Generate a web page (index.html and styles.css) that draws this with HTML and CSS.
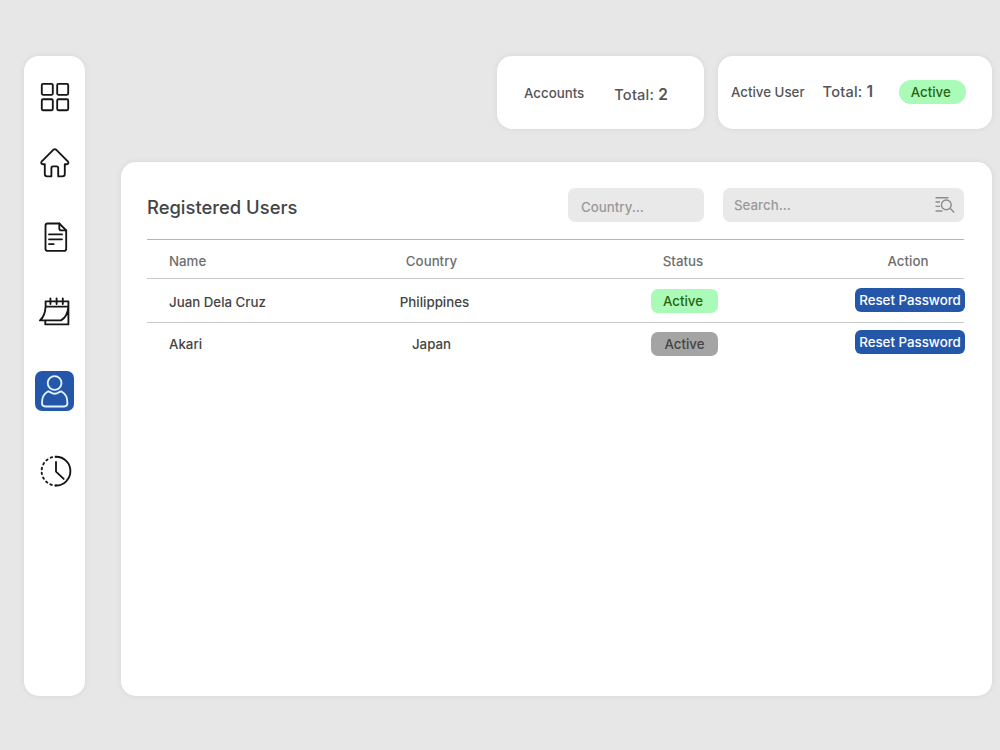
FILE: index.html
```
<!DOCTYPE html>
<html lang="en">
<head>
    <meta charset="utf-8">
    <meta name="viewport" content="width=device-width, initial-scale=1">
    <title>Registered Users</title>
    <link rel="stylesheet" href="styles.css">
</head>

<body>

<nav class="sidebar">
    <a class="nav-dashboard" title="Dashboard">
        <svg viewBox="0 0 40 40"><rect x="6.8" y="6.8" width="11" height="11" rx="1.2" /><rect x="22.2" y="6.8" width="11" height="11" rx="1.2" /><rect x="6.8" y="22.2" width="11" height="11" rx="1.2" /><rect x="22.2" y="22.2" width="11" height="11" rx="1.2" /></svg>
    </a>
    <a class="nav-home" title="Home">
        <svg viewBox="0 0 40 40"><path d="M18.5 6.7 6.8 18.4C5.6 19.8 6.3 21.2 8 21.2H9.8V31Q9.8 33.3 12.1 33.3H16.4V25Q16.4 23.4 18 23.4H21.6Q23.2 23.4 23.2 25V33.3H27.5Q29.8 33.3 29.8 31V21.2H31.6C33.3 21.2 34 19.8 32.8 18.4L21.1 6.7Q19.8 5.5 18.5 6.7Z" /></svg>
    </a>
    <a class="nav-docs" title="Documents">
        <svg viewBox="0 0 40 40"><path d="M24.3 6.5H12.7Q10.5 6.5 10.5 8.7V31.7Q10.5 33.9 12.7 33.9H29Q31.2 33.9 31.2 31.7V13.4Z" /><path d="M24.3 6.5V11.5Q24.3 13.4 26.2 13.4H31.2M14 17.4H27M14 22.3H27M14 27.1H18.7" /></svg>
    </a>
    <a class="nav-calendar" title="Calendar">
        <svg viewBox="0 0 40 40"><path d="M10.6 15V9.3H33.4V32.4H10.3V28.5M10.6 14.6H33.4M10.6 14.6C10.3 20.5 8.5 25.5 4.9 28.4H26C30 26 32.8 21 33.4 14.8M15.4 6.3V12M21.6 6.3V12M27.8 6.3V12" /></svg>
    </a>
    <a class="nav-users selected" title="Users">
        <svg viewBox="0 0 40 40"><circle cx="19.6" cy="12" r="6.9" /><path d="M12.5 20.7C8.7 22.7 7 26.8 7 32.3Q7 35.5 10.2 35.5H29.2Q32.4 35.5 32.4 32.3C32.4 26.8 30.7 22.7 26.9 20.7C25.8 20.2 25 20.5 24 21.2C21.3 23.1 18.1 23.1 15.4 21.2C14.4 20.5 13.6 20.2 12.5 20.7Z" /></svg>
    </a>
    <a class="nav-history" title="History">
        <svg viewBox="0 0 40 40"><path d="M21 5.7A14.4 14.4 0 0 1 21 34.5M21 10.9V20.6L28.7 27.9" /><path class="dashed" d="M21 34.5A14.4 14.4 0 0 1 21 5.7" /></svg>
    </a>
</nav>

<main>
    <div class="cards">
        <div class="card accounts">
            <span class="label">Accounts</span>
            <span class="total">Total: <b>2</b></span>
        </div>
        <div class="card active-user">
            <span class="label">Active User</span>
            <span class="total">Total: <b>1</b></span>
            <span class="badge pill">Active</span>
        </div>
    </div>

    <section class="panel">
        <header>
            <h1>Registered Users</h1>
            <div class="field country">Country...</div>
            <div class="field search">
                <span>Search...</span>
                <svg viewBox="0 0 20 18"><path d="M.5 1.7H13.5M.5 6H5M.5 10.4H5M.5 15H7.5M15.3 12.6 19.2 16.5" /><circle cx="11.3" cy="8.9" r="4.9" /></svg>
            </div>
        </header>
        <div class="users">
            <div class="row head">
                <span class="name">Name</span>
                <span>Country</span>
                <span>Status</span>
                <span class="action">Action</span>
            </div>
            <div class="row first">
                <span class="name">Juan Dela Cruz</span>
                <span class="shift">Philippines</span>
                <span class="badge">Active</span>
                <button>Reset Password</button>
            </div>
            <div class="row last">
                <span class="name">Akari</span>
                <span>Japan</span>
                <span class="badge off">Active</span>
                <button>Reset Password</button>
            </div>
        </div>
    </section>
</main>

</body>
</html>
```
FILE: styles.css
```
* { box-sizing: border-box; }
body { margin: 0; height: 750px; padding: 56px 8px 54px 24px; display: flex; gap: 36px; overflow: hidden; background: #e7e7e7; color: #444; font: 500 13.3px/20px Inter, "Liberation Sans", sans-serif; }

.sidebar, .card, .panel { background: #fff; box-shadow: 0 0 6px rgba(0, 0, 0, 0.07); }
.sidebar { width: 61px; padding: 21px 0 0 11px; border-radius: 15px; }
.sidebar a { display: block; width: 39px; height: 40px; }
.sidebar svg { display: block; width: 40px; height: 40px; }
.sidebar .nav-home { margin-top: 26px; }
.sidebar .nav-docs { margin-top: 34px; }
.sidebar .nav-calendar { margin-top: 35px; }
.sidebar .nav-users { margin-top: 39.4px; }
.sidebar .nav-history { margin-top: 39.6px; }
.sidebar .selected { background: #2457a9; border-radius: 7px; }
svg { fill: none; stroke: #151515; stroke-width: 1.85; stroke-linecap: round; stroke-linejoin: round; }
.selected svg { stroke: #e2f3ff; }
.dashed { stroke-dasharray: 1.6 3.43; stroke-dashoffset: 0.8; }

main { width: 871px; display: flex; flex-direction: column; gap: 33px; }
.cards { display: flex; justify-content: flex-end; gap: 14px; }
.card { height: 73px; display: flex; align-items: center; border-radius: 15px; color: #555; }
.accounts { width: 207px; padding: 1px 0 0 27px; }
.accounts .total { margin: 3px 0 0 30px; }
.active-user { width: 274px; padding: 0 0 1px 13px; }
.active-user .total { margin-left: 18px; }
.total { font-size: 14.6px; letter-spacing: 0.2px; }
.total b { font-size: 15.5px; font-weight: 600; }

.badge { width: 67px; height: 24px; line-height: 24px; border-radius: 7px; background: #a9fbb7; color: #2b6411; text-align: center; }
.pill { margin-left: 25.5px; padding-right: 3px; border-radius: 12px; }
.off { background: #a4a4a4; color: #444; }

.panel { flex: 1; padding: 26px 28px 0 26px; border-radius: 15px; }
.panel header { display: flex; height: 51px; }
h1 { flex: 1; margin: 7px 0 0; font-size: 18.4px; line-height: 24px; font-weight: 500; }
.field { height: 34px; border-radius: 7px; background: #e9e9e9; color: #999; line-height: 34px; }
.country { width: 136px; padding: 2px 0 0 13px; margin-right: 19px; }
.search { width: 241px; padding: 0 9px 0 11px; display: flex; justify-content: space-between; align-items: center; }
.search svg { width: 20px; height: 18px; stroke: #8c8c8c; stroke-width: 1.4; stroke-linecap: butt; }

.users { border-top: 1px solid #b5b5b5; }
.row { height: 44px; display: grid; grid-template-columns: 184px 201px 302px 131px; align-items: center; text-align: center; border-bottom: 1px solid #c8c8c8; }
.row .name { padding-left: 22px; text-align: left; }
.row .shift { padding-left: 6px; }
.row .badge { margin-left: 119px; }
.row button { width: 110px; height: 24px; margin: 0 0 4px 21px; padding: 0; border: none; border-radius: 6px; background: #2457a9; color: #fff; font: inherit; white-space: nowrap; }
.head { height: 39px; padding-top: 4px; color: #6e6e6e; }
.head .action { padding-left: 17px; }
.first { padding-top: 2px; }
.first .badge { margin-bottom: 2px; padding-right: 3px; }
.last { height: 42px; border-bottom: none; }
```
